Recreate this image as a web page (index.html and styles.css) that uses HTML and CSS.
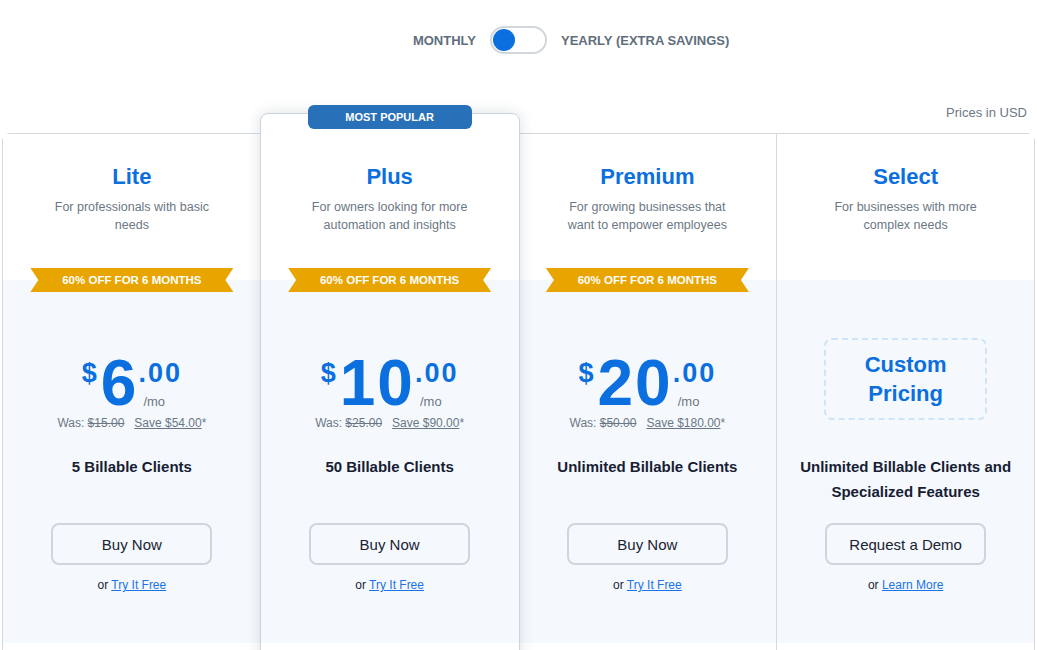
FILE: index.html
```html
<!DOCTYPE html>
<html>
<head>
    <title>Pricing</title>
    <link rel="stylesheet" href="styles.css">
</head>
<body>
    <div class="toggle-row">
        <span class="period period-left">MONTHLY</span>
        <span class="switch"><span class="knob"></span></span>
        <span class="period">YEARLY (EXTRA SAVINGS)</span>
    </div>
    <p class="currency-note">Prices in USD</p>

    <div class="plans">
        <div class="plan">
            <div class="plan-head">
                <h3>Lite</h3>
                <p>For professionals with basic needs</p>
            </div>
            <div class="plan-body">
                <div class="ribbon">60% OFF FOR 6 MONTHS</div>
                <div class="price">
                    <span class="cur">$</span>
                    <span class="amount">6</span>
                    <span class="side"><span class="cents">.00</span><span class="per">/mo</span></span>
                </div>
                <p class="was">Was: <s>$15.00</s><a href="#">Save $54.00</a>*</p>
                <p class="clients">5 Billable Clients</p>
                <button class="cta">Buy Now</button>
                <p class="alt">or <a href="#">Try It Free</a></p>
            </div>
        </div>

        <div class="plan plan-featured">
            <span class="badge">MOST POPULAR</span>
            <div class="plan-head">
                <h3>Plus</h3>
                <p>For owners looking for more automation and insights</p>
            </div>
            <div class="plan-body">
                <div class="ribbon">60% OFF FOR 6 MONTHS</div>
                <div class="price">
                    <span class="cur">$</span>
                    <span class="amount">10</span>
                    <span class="side"><span class="cents">.00</span><span class="per">/mo</span></span>
                </div>
                <p class="was">Was: <s>$25.00</s><a href="#">Save $90.00</a>*</p>
                <p class="clients">50 Billable Clients</p>
                <button class="cta">Buy Now</button>
                <p class="alt">or <a href="#">Try It Free</a></p>
            </div>
        </div>

        <div class="plan">
            <div class="plan-head">
                <h3>Premium</h3>
                <p>For growing businesses that want to empower employees</p>
            </div>
            <div class="plan-body">
                <div class="ribbon">60% OFF FOR 6 MONTHS</div>
                <div class="price">
                    <span class="cur">$</span>
                    <span class="amount">20</span>
                    <span class="side"><span class="cents">.00</span><span class="per">/mo</span></span>
                </div>
                <p class="was">Was: <s>$50.00</s><a href="#">Save $180.00</a>*</p>
                <p class="clients">Unlimited Billable Clients</p>
                <button class="cta">Buy Now</button>
                <p class="alt">or <a href="#">Try It Free</a></p>
            </div>
        </div>

        <div class="plan plan-select">
            <div class="plan-head">
                <h3>Select</h3>
                <p>For businesses with more complex needs</p>
            </div>
            <div class="plan-body">
                <div class="custom">Custom<br>Pricing</div>
                <p class="clients clients-custom">Unlimited Billable Clients and Specialized Features</p>
                <button class="cta">Request a Demo</button>
                <p class="alt">or <a href="#">Learn More</a></p>
            </div>
        </div>
    </div>
</body>
</html>
```

FILE: styles.css
```css
body {
    margin: 0;
    padding: 0 2px;
    font-family: "Liberation Sans", Arial, sans-serif;
    background-color: #fff;
    color: #1a2334;
}

/* billing period switch */
.toggle-row {
    display: grid;
    grid-template-columns: 1fr auto 1fr;
    align-items: center;
    column-gap: 14px;
    padding-top: 26px;
}
.period {
    font-size: 13px;
    font-weight: bold;
    color: #5f6e7d;
}
.period-left {
    text-align: right;
}
.switch {
    display: flex;
    align-items: center;
    width: 57px;
    height: 28px;
    box-sizing: border-box;
    border: 2px solid #d2d7dd;
    border-radius: 14px;
    padding: 0 1px;
}
.knob {
    width: 22px;
    height: 22px;
    border-radius: 50%;
    background-color: #0b6fdf;
}

.currency-note {
    margin: 50px 8px 11px 0;
    text-align: right;
    font-size: 13px;
    line-height: 18px;
    color: #6b7785;
}

/* plan cards */
.plans {
    display: grid;
    grid-template-columns: repeat(4, 1fr);
    border: 1px solid #d3d9df;
    border-radius: 8px 8px 0 0;
}
.plan {
    background-color: #fff;
    padding-bottom: 30px;
    text-align: center;
}
.plan-select {
    border-left: 1px solid #d3d9df;
}
.plan-featured {
    position: relative;
    z-index: 1;
    margin: -21px -1px 0;
    border: 1px solid #cdd4db;
    border-radius: 8px;
    box-shadow: 0 0 14px rgba(40, 60, 90, 0.16);
}
.badge {
    position: absolute;
    top: -9px;
    left: 50%;
    transform: translateX(-50%);
    width: 164px;
    height: 24px;
    line-height: 24px;
    border-radius: 6px;
    background-color: #2870b8;
    color: #fff;
    font-size: 11px;
    font-weight: bold;
}

.plan-head {
    height: 146px;
    box-sizing: border-box;
    padding-top: 29px;
}
.plan-featured .plan-head {
    height: 166px;
    padding-top: 49px;
}
.plan-head h3 {
    margin: 0 0 7px;
    font-size: 22px;
    line-height: 28px;
    color: #0b6fdf;
}
.plan-head p {
    max-width: 172px;
    margin: 0 auto;
    font-size: 12.5px;
    line-height: 18px;
    color: #6b7785;
}

.plan-body {
    display: flow-root;
    background-color: #f5f9fd;
    padding-bottom: 49px;
}
.ribbon {
    width: 203px;
    height: 24px;
    margin: -12px auto 0;
    line-height: 24px;
    background-color: #e8a500;
    color: #fff;
    font-size: 11.5px;
    font-weight: bold;
    clip-path: polygon(0 0, 100% 0, calc(100% - 8px) 50%, 100% 100%, 0 100%, 8px 50%);
}

.price {
    display: flex;
    justify-content: center;
    align-items: flex-start;
    margin-top: 63px;
    color: #0b6fdf;
}
.cur {
    margin: 5px 4px 0 0;
    font-size: 27px;
    line-height: 26px;
    font-weight: bold;
}
.amount {
    font-size: 64px;
    line-height: 56px;
    font-weight: bold;
    letter-spacing: 2px;
}
.side {
    display: flex;
    flex-direction: column;
    align-items: flex-start;
}
.cents {
    margin-top: 5px;
    font-size: 27px;
    line-height: 26px;
    font-weight: bold;
    letter-spacing: 2px;
}
.per {
    margin: 8px 0 0 5px;
    font-size: 13px;
    line-height: 16px;
    color: #6b7785;
}

.was {
    margin: 4px 0 0;
    font-size: 12px;
    line-height: 16px;
    color: #6b7785;
}
.was s {
    margin-right: 10px;
}
.was a {
    color: #6b7785;
}

.clients {
    min-height: 50px;
    max-width: 230px;
    margin: 23px auto 0;
    font-size: 15px;
    line-height: 25px;
    font-weight: bold;
    color: #172033;
}
.clients-custom {
    margin-top: 34px;
}

.cta {
    display: block;
    width: 161px;
    height: 42px;
    margin: 19px auto 0;
    border: 2px solid #cfd5db;
    border-radius: 8px;
    background-color: transparent;
    font-family: inherit;
    font-size: 15px;
    color: #1a2334;
    cursor: pointer;
}
.alt {
    margin: 11px 0 0;
    font-size: 12px;
    line-height: 18px;
    color: #1a2334;
}
.alt a {
    color: #1a73e8;
}

.custom {
    width: 163px;
    height: 82px;
    box-sizing: border-box;
    margin: 58px auto 0;
    padding-top: 10px;
    border: 2px dashed #cfe4f6;
    border-radius: 8px;
    font-size: 22px;
    line-height: 29px;
    font-weight: bold;
    color: #0b6fdf;
}
```
